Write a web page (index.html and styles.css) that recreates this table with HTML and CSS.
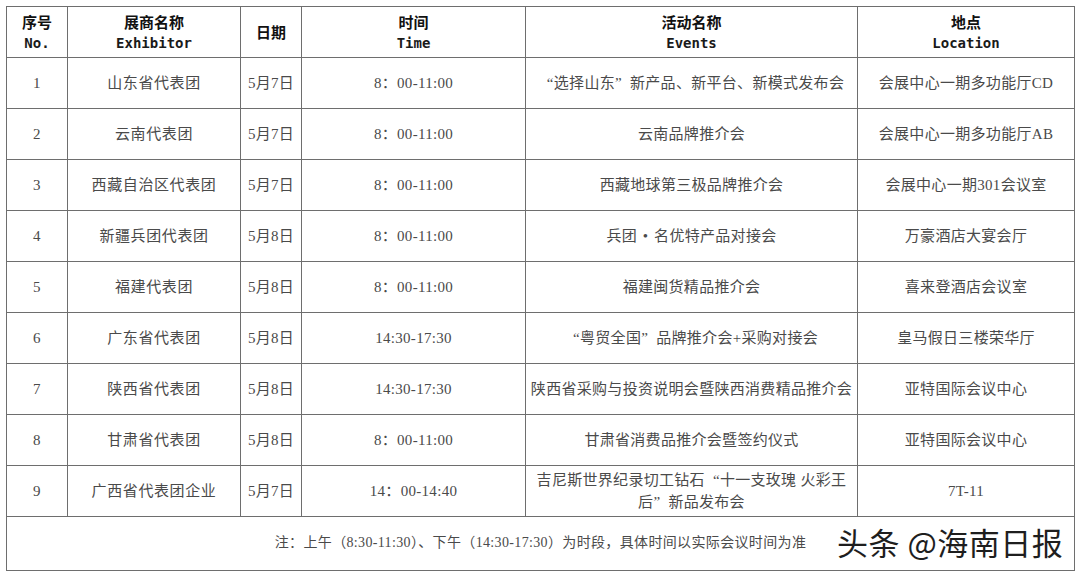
FILE: index.html
```html
<!DOCTYPE html>
<html lang="zh-CN">
<head>
<meta charset="utf-8">
<title>活动日程</title>
<link rel="stylesheet" href="styles.css">
</head>
<body>
<div class="sheet">
  <table class="schedule">
    <colgroup>
      <col class="c-no"><col class="c-ex"><col class="c-date"><col class="c-time"><col class="c-ev"><col class="c-loc">
    </colgroup>
    <thead>
      <tr>
        <th><span class="zh">序号</span><span class="en">No.</span></th>
        <th><span class="zh">展商名称</span><span class="en">Exhibitor</span></th>
        <th><span class="zh">日期</span></th>
        <th><span class="zh">时间</span><span class="en">Time</span></th>
        <th><span class="zh">活动名称</span><span class="en">Events</span></th>
        <th><span class="zh">地点</span><span class="en">Location</span></th>
      </tr>
    </thead>
    <tbody>
      <tr><td>1</td><td class="sp">山东省代表团</td><td>5月7日</td><td>8：00-11:00</td><td><span class="qo">“</span>选择山东<span class="qc">”</span>新产品、新平台、新模式发布会</td><td>会展中心一期多功能厅CD</td></tr>
      <tr><td>2</td><td class="sp">云南代表团</td><td>5月7日</td><td>8：00-11:00</td><td>云南品牌推介会</td><td>会展中心一期多功能厅AB</td></tr>
      <tr><td>3</td><td class="sp">西藏自治区代表团</td><td>5月7日</td><td>8：00-11:00</td><td>西藏地球第三极品牌推介会</td><td>会展中心一期301会议室</td></tr>
      <tr><td>4</td><td class="sp">新疆兵团代表团</td><td>5月8日</td><td>8：00-11:00</td><td>兵团<span class="dot">•</span>名优特产品对接会</td><td>万豪酒店大宴会厅</td></tr>
      <tr><td>5</td><td class="sp">福建代表团</td><td>5月8日</td><td>8：00-11:00</td><td>福建闽货精品推介会</td><td>喜来登酒店会议室</td></tr>
      <tr><td>6</td><td class="sp">广东省代表团</td><td>5月8日</td><td>14:30-17:30</td><td><span class="qo">“</span>粤贸全国<span class="qc">”</span>品牌推介会+采购对接会</td><td>皇马假日三楼荣华厅</td></tr>
      <tr><td>7</td><td class="sp">陕西省代表团</td><td>5月8日</td><td>14:30-17:30</td><td>陕西省采购与投资说明会暨陕西消费精品推介会</td><td>亚特国际会议中心</td></tr>
      <tr><td>8</td><td class="sp">甘肃省代表团</td><td>5月8日</td><td>8：00-11:00</td><td>甘肃省消费品推介会暨签约仪式</td><td>亚特国际会议中心</td></tr>
      <tr><td>9</td><td class="sp">广西省代表团企业</td><td>5月7日</td><td>14：00-14:40</td><td class="two">吉尼斯世界纪录切工钻石<span class="qo">“</span>十一支玫瑰 火彩王<br>后<span class="qc">”</span>新品发布会</td><td>7T-11</td></tr>
      <tr class="note"><td colspan="6">注：上午（8:30-11:30）、下午（14:30-17:30）为时段，具体时间以实际会议时间为准</td></tr>
    </tbody>
  </table>
  <div class="watermark">头条 @海南日报</div>
</div>
</body>
</html>
```
FILE: styles.css
```css
html, body {
  margin: 0;
  padding: 0;
  background: #ffffff;
}
.sheet {
  position: relative;
  padding: 6px 0 0 6px;
  width: 1074px;
}
.schedule {
  border-collapse: collapse;
  table-layout: fixed;
  width: 1068px;
  font-family: "Liberation Serif", "Noto Sans CJK SC", serif;
  font-size: 15px;
  color: #4a4a4a;
}
.c-no { width: 61px; }
.c-ex { width: 173px; }
.c-date { width: 61px; }
.c-time { width: 224px; }
.c-ev { width: 332px; }
.c-loc { width: 217px; }
.schedule th, .schedule td {
  border: 1px solid #6e6e6e;
  text-align: center;
  vertical-align: middle;
  padding: 0;
}
.schedule th {
  height: 50px;
  color: #111111;
  font-weight: normal;
}
.schedule td {
  height: 50px;
  line-height: 22px;
  letter-spacing: 0.3px;
}
.zh {
  display: block;
  font-family: "Noto Sans CJK SC", sans-serif;
  font-weight: bold;
  font-size: 15px;
  line-height: 22px;
}
.en {
  display: block;
  font-family: "DejaVu Sans Mono", monospace;
  font-weight: bold;
  font-size: 14px;
  line-height: 21px;
  color: #1a1a1a;
}
.schedule td.sp {
  letter-spacing: 0.6px;
}
.qo, .qc {
  display: inline-block;
  width: 15px;
  font-family: "Liberation Serif", serif;
}
.qo {
  text-align: right;
}
.qc {
  text-align: left;
}
.dot {
  display: inline-block;
  width: 17px;
  text-align: center;
  font-family: "Liberation Serif", serif;
}
.two {
  line-height: 21px;
}
.schedule .note td {
  height: 51px;
  font-size: 14px;
  letter-spacing: 0.35px;
  padding-bottom: 2px;
}
.watermark {
  position: absolute;
  left: 837px;
  top: 521px;
  font-family: "Noto Sans CJK SC", sans-serif;
  font-size: 31px;
  line-height: 42px;
  color: #1e1e1e;
  letter-spacing: 0.5px;
}
```
